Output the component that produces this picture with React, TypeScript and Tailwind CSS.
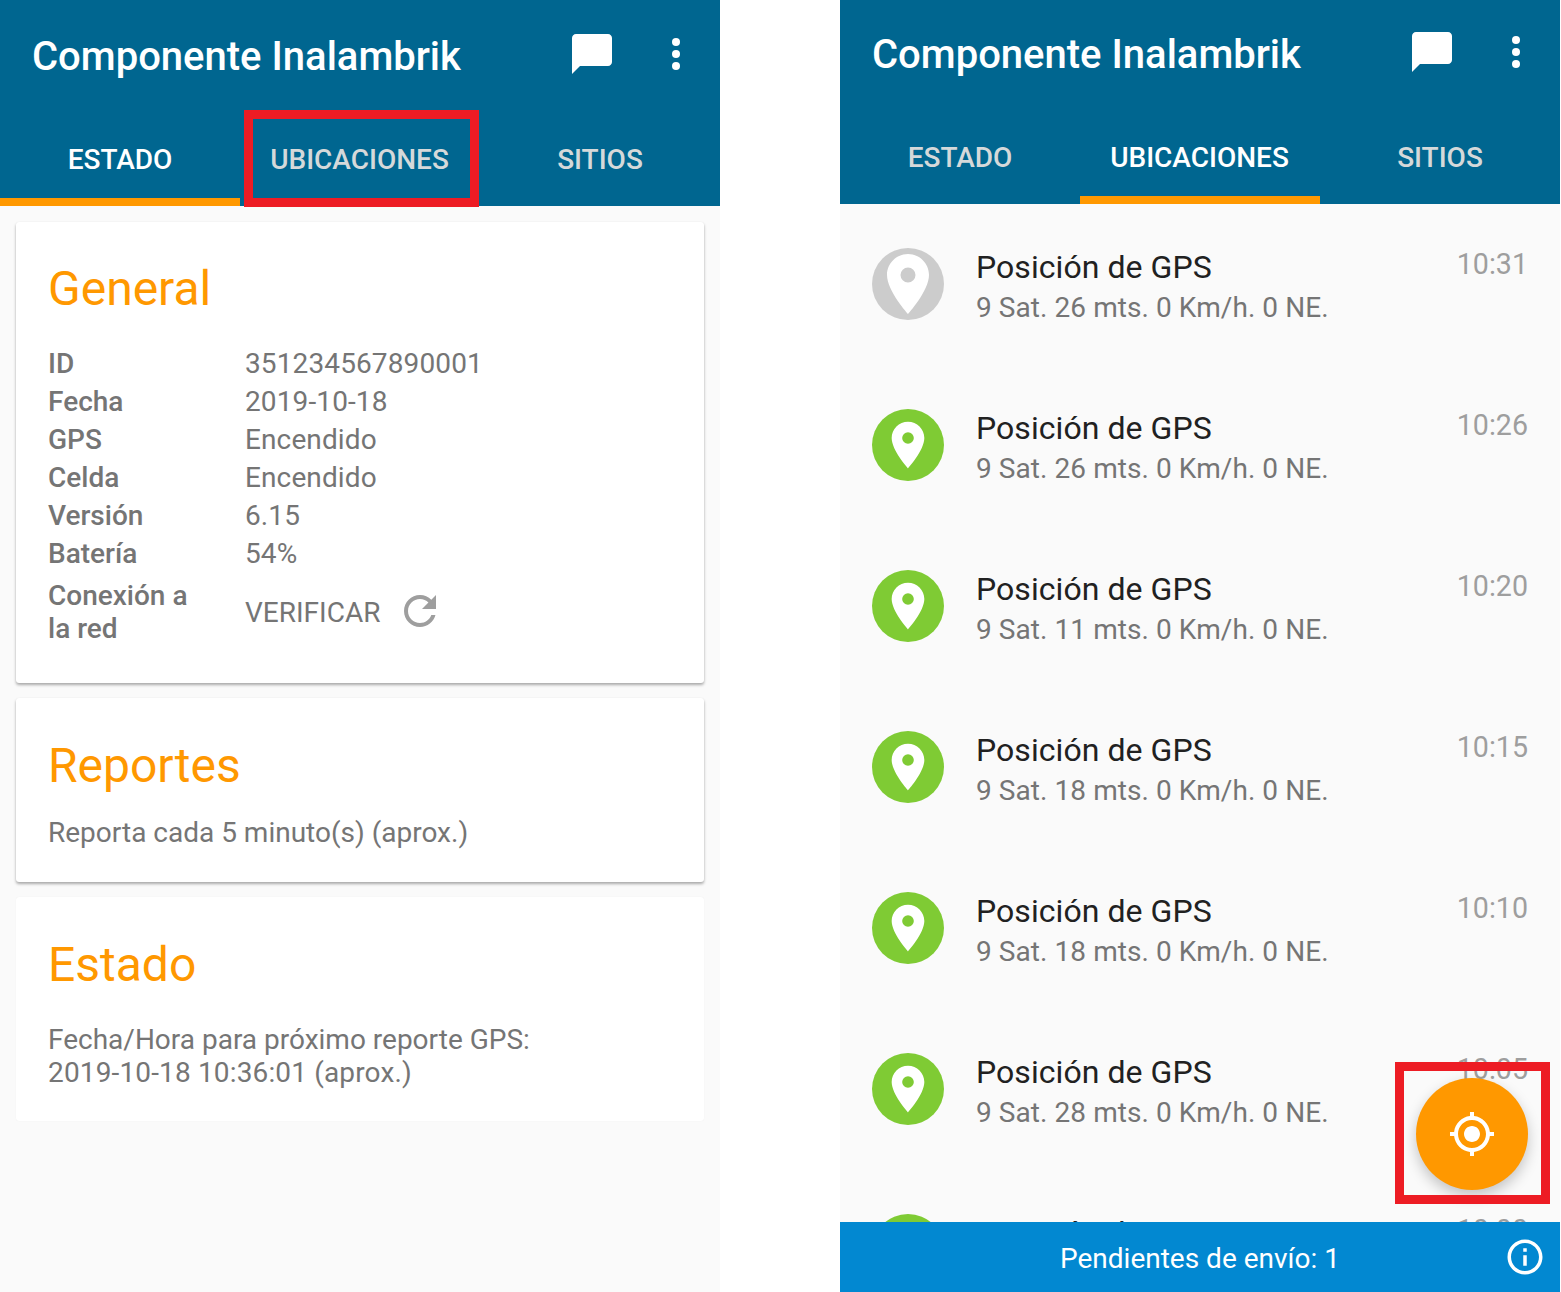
const FONT = "font-['Roboto',sans-serif]"

const CHAT = 'M20 2H4c-1.1 0-2 .9-2 2v18l4-4h14c1.1 0 2-.9 2-2V4c0-1.1-.9-2-2-2z'
const PIN = 'M12 2C8.13 2 5 5.13 5 9c0 5.25 7 13 7 13s7-7.75 7-13c0-3.87-3.13-7-7-7zm0 9.5a2.5 2.5 0 010-5 2.5 2.5 0 010 5z'
const REFRESH = 'M17.65 6.35C16.2 4.9 14.21 4 12 4c-4.42 0-7.99 3.58-7.99 8s3.57 8 7.99 8c3.73 0 6.84-2.55 7.73-6h-2.08c-.82 2.33-3.04 4-5.65 4-3.31 0-6-2.69-6-6s2.69-6 6-6c1.66 0 3.14.69 4.22 1.78L13 11h7V4l-2.35 2.35z'
const TARGET = 'M12 8c-2.21 0-4 1.79-4 4s1.79 4 4 4 4-1.79 4-4-1.79-4-4-4zm8.94 3c-.46-4.17-3.77-7.48-7.94-7.94V1h-2v2.06C6.83 3.52 3.52 6.83 3.06 11H1v2h2.06c.46 4.17 3.77 7.48 7.94 7.94V23h2v-2.06c4.17-.46 7.48-3.77 7.94-7.94H23v-2h-2.06zM12 19c-3.87 0-7-3.13-7-7s3.13-7 7-7 7 3.13 7 7-3.13 7-7 7z'
const INFO = 'M11 7h2v2h-2zm0 4h2v6h-2zm1-9C6.48 2 2 6.48 2 12s4.48 10 10 10 10-4.48 10-10S17.52 2 12 2zm0 18c-4.41 0-8-3.59-8-8s3.59-8 8-8 8 3.59 8 8-3.59 8-8 8z'

const TABS = ['Estado', 'Ubicaciones', 'Sitios']

const GENERAL = [
  ['ID', '351234567890001'],
  ['Fecha', '2019-10-18'],
  ['GPS', 'Encendido'],
  ['Celda', 'Encendido'],
  ['Versión', '6.15'],
  ['Batería', '54%'],
]

const POSITIONS = [
  { time: '10:31', mts: 26, off: true },
  { time: '10:26', mts: 26 },
  { time: '10:20', mts: 11 },
  { time: '10:15', mts: 18 },
  { time: '10:10', mts: 18 },
  { time: '10:05', mts: 28 },
  { time: '10:00', mts: 28 },
]

function Icon({ d, size, className }: { d: string; size: number; className?: string }) {
  return (
    <svg width={size} height={size} viewBox="0 0 24 24" fill="currentColor" className={className}>
      <path d={d} />
    </svg>
  )
}

function AppBar({ active, compact }: { active: number; compact?: boolean }) {
  return (
    <div className={`bg-[#006690] shrink-0 ${compact ? 'h-[204px]' : 'h-[206px]'}`}>
      <div className={`flex items-center text-white ${compact ? 'h-[108px]' : 'h-[112px]'}`}>
        <h1 className="ml-[32px] pt-[2px] flex-1 text-[40px] leading-[48px] font-medium">Componente Inalambrik</h1>
        <Icon d={CHAT} size={48} className="mr-[36px] -translate-y-[2px]" />
        <svg width="48" height="48" viewBox="0 0 24 24" fill="currentColor" className="mr-[20px] -translate-y-[2px]">
          <circle cx="12" cy="6" r="2" />
          <circle cx="12" cy="12" r="2" />
          <circle cx="12" cy="18" r="2" />
        </svg>
      </div>
      <div className="flex">
        {TABS.map((tab, i) => (
          <div
            key={tab}
            className={`w-[240px] flex items-center justify-center text-[28px] font-medium uppercase border-b-[8px] ${compact ? 'h-[96px] pt-[12px]' : 'h-[94px] pt-[10px]'} ${i === 1 ? 'pr-[1px]' : ''} ${i === active ? 'text-white border-[#ff9800]' : 'text-[#d5d9da] border-transparent'}`}
          >
            {tab}
          </div>
        ))}
      </div>
    </div>
  )
}

function Card({ title, flat, className, children }: { title: string; flat?: boolean; className: string; children: React.ReactNode }) {
  return (
    <div className={`bg-white rounded-[3px] pl-[32px] pr-[33px] ${flat ? 'shadow-[0_0_1px_rgba(0,0,0,0.08)]' : 'shadow-[0_2px_3px_rgba(0,0,0,0.32),0_0_1px_rgba(0,0,0,0.08)]'} ${className}`}>
      <h2 className="text-[48px] leading-[56px] text-[#ff9800]">{title}</h2>
      {children}
    </div>
  )
}

function EstadoScreen() {
  return (
    <div className="w-[720px] flex flex-col bg-[#fafafa]">
      <AppBar active={0} />
      <div className="flex flex-col gap-[15px] px-[16px] pt-[16px] text-[28px] text-[#757575]">
        <Card title="General" className="h-[461px] pt-[39px]">
          <div className="mt-[28px] grid grid-cols-[197px_1fr] auto-rows-[38px] leading-[38px]">
            {GENERAL.map(([label, value]) => (
              <div key={label} className="contents">
                <span className="font-medium">{label}</span>
                <span className="tracking-[0.12px]">{value}</span>
              </div>
            ))}
          </div>
          <div className="flex items-center mt-[7px]">
            <span className="w-[197px] pr-[40px] font-medium leading-[33px] -translate-y-[1px]">Conexión a la red</span>
            <span>VERIFICAR</span>
            <Icon d={REFRESH} size={48} className="ml-[16px] -translate-y-[2px] text-[#9e9e9e]" />
          </div>
        </Card>
        <Card title="Reportes" className="h-[184px] pt-[40px]">
          <p className="mt-[20px] leading-[38px]">Reporta cada 5 minuto(s) (aprox.)</p>
        </Card>
        <Card title="Estado" flat className="h-[224px] pt-[40px]">
          <p className="mt-[30px] leading-[33px]">
            Fecha/Hora para próximo reporte GPS:
            <br />
            <span className="tracking-[0.15px]">2019-10-18 10:36:01 (aprox.)</span>
          </p>
        </Card>
      </div>
    </div>
  )
}

function PositionRow({ time, mts, off }: { time: string; mts: number; off?: boolean }) {
  return (
    <div className="h-[161px] shrink-0 flex pt-[44px] pl-[32px] pr-[32px]">
      <div className={`w-[72px] h-[72px] rounded-full flex items-center justify-center text-white ${off ? 'bg-[#cccccc]' : 'bg-[#7fcb34]'}`}>
        <Icon d={PIN} size={off ? 72 : 56} />
      </div>
      <div className="ml-[32px] flex-1 -mt-[1px]">
        <div className="text-[32px] leading-[40px] tracking-[0.06px] text-[#212121]">Posición de GPS</div>
        <div className="text-[28px] leading-[42px] tracking-[0.07px] text-[#757575]">9 Sat. {mts} mts. 0 Km/h. 0 NE.</div>
      </div>
      <div className="text-[28.6px] leading-[36px] -mt-[2px] text-[#9e9e9e]">{time}</div>
    </div>
  )
}

function UbicacionesScreen() {
  return (
    <div className="w-[720px] h-full flex flex-col bg-[#fafafa] relative">
      <AppBar active={1} compact />
      <div className="flex-1 min-h-0 overflow-hidden">
        {POSITIONS.map(p => (
          <PositionRow key={p.time} {...p} />
        ))}
      </div>
      <div className="h-[70px] shrink-0 bg-[#0288d1] text-white flex items-center pt-[4px] relative">
        <span className="ml-[220px] text-[28px]">Pendientes de envío: 1</span>
        <Icon d={INFO} size={42} className="absolute left-[664px] top-[14px]" />
      </div>
      <button className="absolute left-[576px] top-[1078px] w-[112px] h-[112px] rounded-full bg-[#ff9800] text-white flex items-center justify-center shadow-[0_6px_14px_rgba(0,0,0,0.22)]">
        <Icon d={TARGET} size={48} />
      </button>
    </div>
  )
}

export default function App() {
  return (
    <div className={`relative w-[1561px] h-[1292px] bg-white overflow-hidden flex gap-[120px] ${FONT}`}>
      <EstadoScreen />
      <UbicacionesScreen />
      <div className="absolute left-[244px] top-[110px] w-[235px] h-[97px] border-[9px] border-[#ed1c24]" />
      <div className="absolute left-[1395px] top-[1062px] w-[155px] h-[142px] border-[9px] border-[#ed1c24]" />
    </div>
  )
}
